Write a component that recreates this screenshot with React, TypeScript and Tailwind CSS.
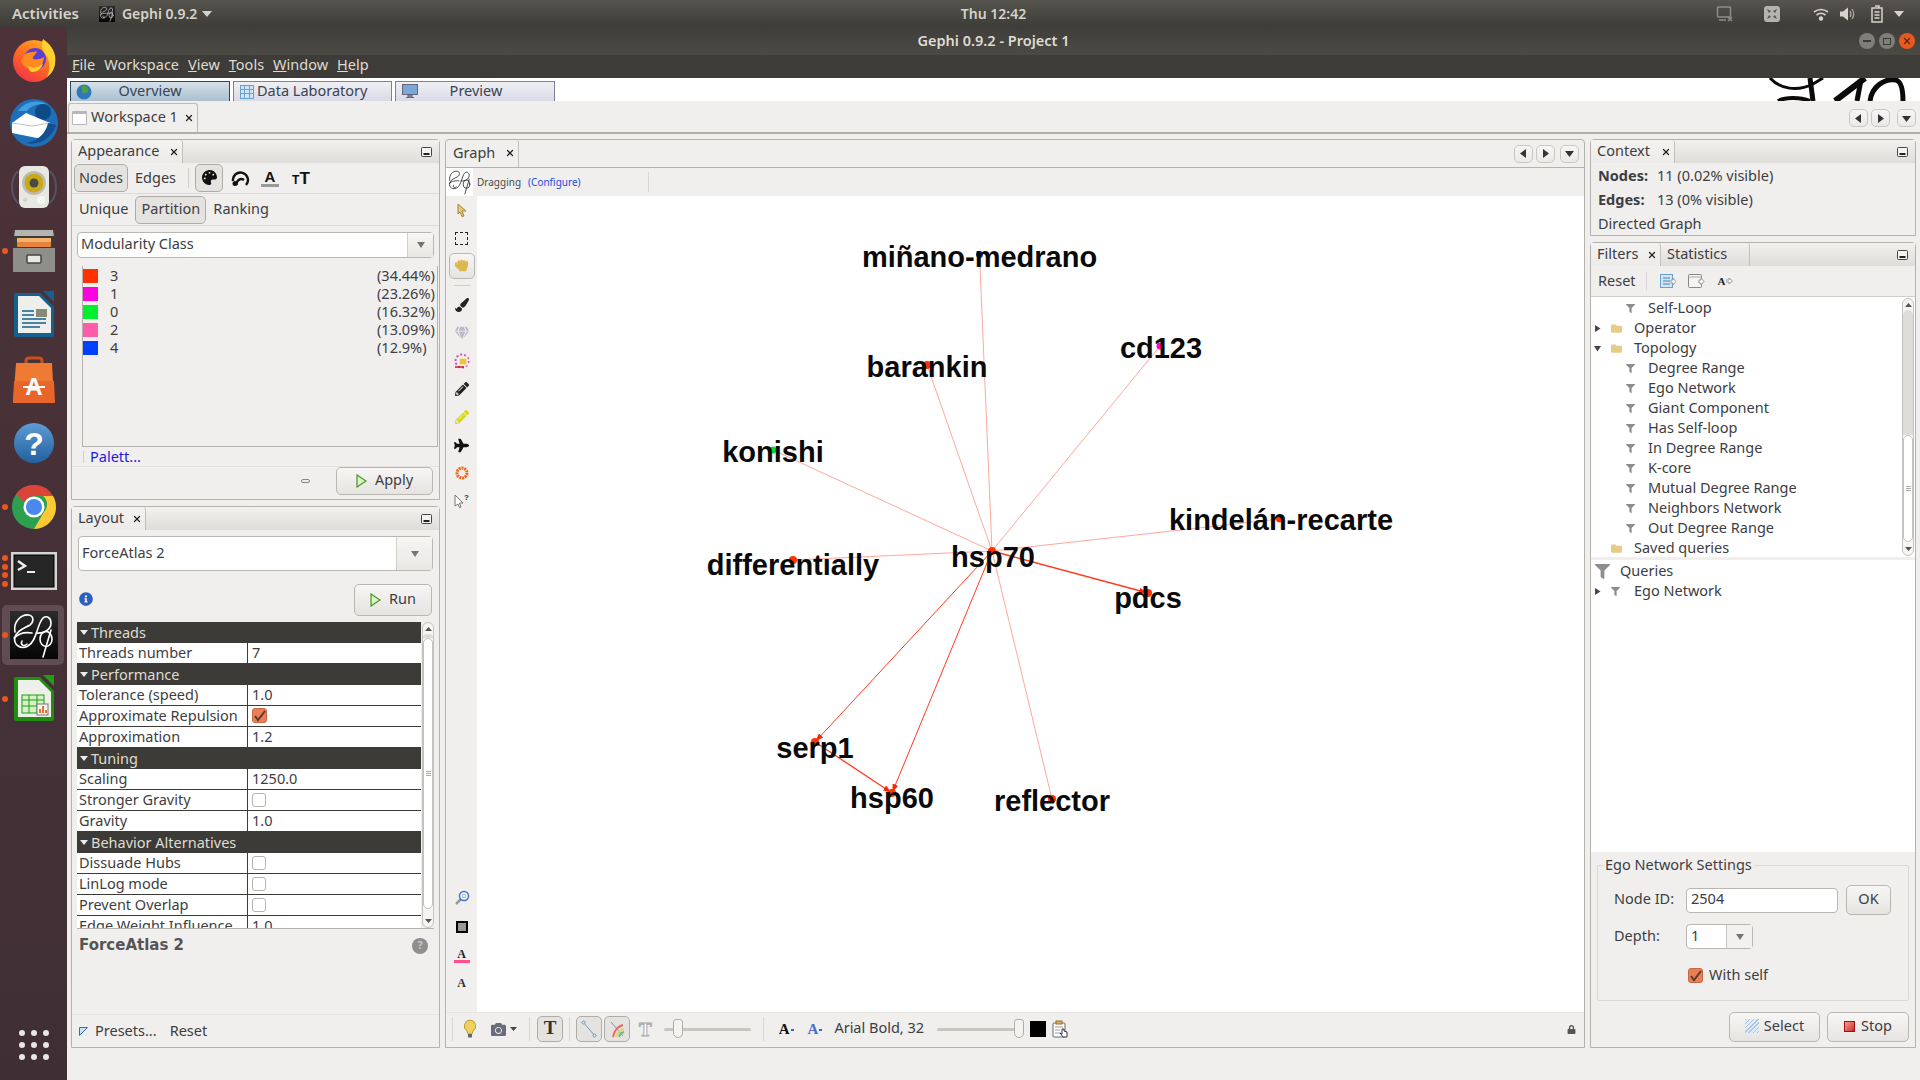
import type { ReactNode } from "react";
import { X } from "lucide-react";
import {
  FaCamera,
  FaFilter,
  FaFolder,
  FaGem,
  FaHandRock,
  FaInfoCircle,
  FaLock,
  FaPaintBrush,
  FaPalette,
  FaPencilAlt,
  FaPlane,
} from "react-icons/fa";

const btn =
  "flex items-center justify-center rounded-[5px] border border-[#b9b7b1] bg-linear-to-b from-[#f7f6f5] to-[#e6e4e1] pb-[2px]";
const pressed = "rounded-[5px] border border-[#aeaca6] bg-[#e5e3e0] flex items-center justify-center pb-[1px]";

function Swirl({ color = "#fff", width = 1.6 }: { color?: string; width?: number }) {
  return (
    <g fill="none" stroke={color} strokeWidth={width} strokeLinecap="round">
      <path d="M5 21C3 11 11 3 19 4c5 1 5 7 1 10-5 3-13 5-15 12-2 8 6 13 13 9 9-5 9-22 15-28 4-3 8 0 8 5 0 7-8 11-15 10" />
      <path d="M4 27c5-5 12-6 18-5" />
      <path d="M12 30c-2 4 2 6 5 3" />
      <ellipse cx="36" cy="28" rx="6" ry="7.500" />
      <path d="M41 19 33 46" />
    </g>
  );
}

function Logo({ size, dark = false }: { size: number; dark?: boolean }) {
  return (
    <svg width={size} height={size} viewBox="0 0 48 48">
      {dark ? (
        <Swirl color="#222" width={1.5} />
      ) : (
        <>
          <defs>
            <linearGradient id="gp" x1="0" y1="0" x2="0" y2="1">
              <stop offset="0" stopColor="#2c2c2c" />
              <stop offset="1" stopColor="#050505" />
            </linearGradient>
          </defs>
          <rect width="48" height="48" fill="url(#gp)" />
          <Swirl />
        </>
      )}
    </svg>
  );
}

function Firefox() {
  return (
    <svg width="48" height="48" viewBox="0 0 48 48">
      <defs>
        <linearGradient id="ff" x1="0.8" y1="0" x2="0.2" y2="1">
          <stop offset="0" stopColor="#ffb020" />
          <stop offset="0.5" stopColor="#ff6a20" />
          <stop offset="1" stopColor="#f0304a" />
        </linearGradient>
      </defs>
      <circle cx="24" cy="26" r="21" fill="url(#ff)" />
      <path d="M33 4c9 6 14 15 12 25-1 6-4 10-8 13 4-9 3-17-2-23-3-4-4-9-2-15Z" fill="#ffd030" />
      <circle cx="25" cy="24" r="11" fill="#5a3fd0" />
      <path d="M14 20c5-4 9-2 13-4-1 4-5 5-4 8 3 1 8 0 11-2 0 7-5 12-12 12-6 0-10-4-11-9 1 0 2-2 3-5Z" fill="#ff8a20" />
      <path d="M18 31c5 3 11 2 15-3-1 6-6 9-11 9-2 0-3-3-4-6Z" fill="#ffcf30" />
    </svg>
  );
}

function Thunderbird() {
  return (
    <svg width="48" height="48" viewBox="0 0 48 48">
      <circle cx="24" cy="24" r="24" fill="#1e6fb8" />
      <path d="M8 12C14 3 28-1 38 6c-8-2-17 0-21 6Z" fill="#3f9fe0" />
      <circle cx="33" cy="13" r="8" fill="#0f4a88" />
      <path d="M2 24 16 14l24 10-8 16-30-6Z" fill="#fff" />
      <path d="M2 24 22 27l18-3" stroke="#b9c4cf" fill="none" />
      <path d="M38 24c-2 10-10 18-22 20 12 3 26-4 30-18Z" fill="#134f92" />
    </svg>
  );
}

function Speaker() {
  return (
    <svg width="48" height="48" viewBox="0 0 48 48">
      <path d="M8 8C0 16 0 32 8 40M40 8c8 8 8 24 0 32" stroke="#56627c" fill="none" strokeWidth="2" opacity="0.7" />
      <rect x="9" y="3" width="30" height="42" rx="6" fill="#e8e8e2" />
      <circle cx="24" cy="20" r="12" fill="#bcbcb4" />
      <circle cx="24" cy="20" r="9.5" fill="#c9a918" />
      <circle cx="24" cy="20" r="4.5" fill="#4a4a42" />
      <circle cx="31" cy="37" r="4" fill="#f6f6f2" />
      <circle cx="15" cy="37" r="2" fill="#d0d0ca" />
    </svg>
  );
}

function Files() {
  return (
    <svg width="48" height="48" viewBox="0 0 48 48">
      <path d="M5 3h38l1 7H4Z" fill="#b4b4b0" />
      <rect x="4" y="9" width="40" height="13" fill="#3e3a36" />
      <rect x="7" y="11" width="34" height="4" fill="#f2b46a" />
      <rect x="7" y="15" width="34" height="5" fill="#e8813c" />
      <rect x="3" y="21" width="42" height="24" fill="#8e8e8a" />
      <rect x="17" y="28" width="14" height="8" rx="1" fill="#e8e8e4" stroke="#444" strokeWidth="1.5" />
    </svg>
  );
}

function OfficeDoc({ tone, corner, children }: { tone: string; corner: string; children: ReactNode }) {
  return (
    <svg width="48" height="48" viewBox="0 0 48 48">
      <path d="M6 2h24l14 14v28a2 2 0 0 1-2 2H6a2 2 0 0 1-2-2V4a2 2 0 0 1 2-2Z" fill={tone} />
      <path d="M8 5h21l12 12v25H8Z" fill="#eeeeea" />
      <path d="M33 0h11v11Z" fill={corner} />
      {children}
    </svg>
  );
}

function Bag() {
  return (
    <svg width="48" height="48" viewBox="0 0 48 48">
      <path d="M16 10V6q0-3 3-3h10q3 0 3 3v4" fill="none" stroke="#c9501c" strokeWidth="3" />
      <path d="M6 8h36l2 40H3Z" fill="#ef7a33" />
      <path d="M4 26h40l1 22H3Z" fill="#e9662a" />
      <text x="24" y="40" textAnchor="middle" fill="#fff" className="font-['Liberation_Sans',sans-serif] font-bold text-[24px]">
        A
      </text>
      <rect x="13" y="31" width="22" height="2" fill="#fff" />
    </svg>
  );
}

function Help() {
  return (
    <svg width="48" height="48" viewBox="0 0 48 48">
      <defs>
        <linearGradient id="hp" x1="0" y1="0" x2="0" y2="1">
          <stop offset="0" stopColor="#5d9cd6" />
          <stop offset="1" stopColor="#22609e" />
        </linearGradient>
      </defs>
      <circle cx="24" cy="24" r="20" fill="url(#hp)" />
      <text x="24" y="36" textAnchor="middle" fill="#fff" className="font-['Liberation_Sans',sans-serif] font-bold text-[32px]">
        ?
      </text>
    </svg>
  );
}

function Chrome() {
  return (
    <svg width="48" height="48" viewBox="0 0 48 48">
      <circle cx="24" cy="24" r="22" fill="#2da04f" />
      <path d="M24 2a22 22 0 0 1 19 11H24a11 11 0 0 0-10 6L6 11A22 22 0 0 1 24 2Z" fill="#dc4437" />
      <path d="M43 13a22 22 0 0 1-19 33l10-17a11 11 0 0 0-1-16Z" fill="#fcc934" />
      <circle cx="24" cy="24" r="10.5" fill="#fff" />
      <circle cx="24" cy="24" r="8" fill="#4a88ee" />
    </svg>
  );
}

function Terminal() {
  return (
    <svg width="48" height="48" viewBox="0 0 48 48">
      <rect x="1" y="5" width="46" height="38" fill="#d5d5d2" />
      <rect x="4" y="8" width="40" height="32" fill="#262626" stroke="#000" />
      <path d="M8 14 15 19 8 23" stroke="#eee" strokeWidth="2.5" fill="none" />
      <path d="M17 25h8" stroke="#eee" strokeWidth="2" />
    </svg>
  );
}

function DockSlot({ dots = 0, active, children }: { dots?: number; active?: boolean; children: ReactNode }) {
  return (
    <div className="relative flex h-[64px] w-full items-center justify-center">
      {active && <div className="absolute left-[2px] top-[2px] h-[60px] w-[62px] rounded-[5px] bg-[#604d53]" />}
      <div className="absolute left-[2px] top-0 flex h-full w-[6px] flex-col items-center justify-center gap-[2.5px]">
        {Array.from({ length: dots }).map((_, i) => (
          <span key={i} className="h-[6px] w-[6px] rounded-full bg-[#e9571f]" />
        ))}
      </div>
      <div className="relative">{children}</div>
    </div>
  );
}

function Dock() {
  return (
    <div className="flex w-[67px] shrink-0 flex-col bg-linear-to-b from-[#4d3239] to-[#3f2f35]">
      <DockSlot><Firefox /></DockSlot>
      <DockSlot><Thunderbird /></DockSlot>
      <DockSlot><Speaker /></DockSlot>
      <DockSlot dots={1}><Files /></DockSlot>
      <DockSlot>
        <OfficeDoc tone="#14618f" corner="#14618f">
          <path d="M12 20h12M12 24h12M12 28h24M12 32h24M12 36h18" stroke="#14618f" strokeWidth="1.6" />
          <rect x="26" y="18" width="11" height="8" fill="#8a8a78" />
        </OfficeDoc>
      </DockSlot>
      <DockSlot><Bag /></DockSlot>
      <DockSlot><Help /></DockSlot>
      <DockSlot dots={1}><Chrome /></DockSlot>
      <DockSlot dots={4}><Terminal /></DockSlot>
      <DockSlot dots={1} active><Logo size={48} /></DockSlot>
      <DockSlot dots={1}>
        <OfficeDoc tone="#1f8f12" corner="#1f9f12">
          <rect x="12" y="20" width="22" height="18" fill="#d6f0c8" stroke="#1f9f12" />
          <path d="M12 25h22M12 31h22M19 20v18M27 20v18" stroke="#1f9f12" />
          <rect x="27" y="29" width="11" height="11" fill="#f4f4f4" stroke="#777" />
          <path d="M30 38v-4M33 38v-7M36 38v-3" stroke="#e8702a" strokeWidth="2" />
        </OfficeDoc>
      </DockSlot>
      <div className="mt-auto mb-[20px] grid w-fit grid-cols-3 gap-[6px] self-center">
        {Array.from({ length: 9 }).map((_, i) => (
          <span key={i} className="h-[6px] w-[6px] rounded-full bg-[#e8e6e6]" />
        ))}
      </div>
    </div>
  );
}

function TopBar() {
  return (
    <div className="flex h-[27px] shrink-0 items-center bg-linear-to-b from-[#56544d] to-[#3d3c37] text-[14px] font-semibold text-[#d6d3cb]">
      <div className="flex w-[287px] items-center pl-[12px]">
        <span className="text-[15px]">Activities</span>
        <span className="ml-[20px]"><Logo size={16} /></span>
        <span className="ml-[7px]">Gephi 0.9.2</span>
        <svg className="ml-[5px]" width="10" height="6" viewBox="0 0 10 6"><path d="M0 0h10L5 6Z" fill="#d6d3cb" /></svg>
      </div>
      <div className="flex-1 text-center">Thu 12:42</div>
      <div className="flex w-[220px] items-center pl-[16px]">
        <svg width="18" height="18" viewBox="0 0 18 18" fill="none" stroke="#8f8d86" strokeWidth="1.5">
          <rect x="1.5" y="2" width="13" height="10" rx="1" />
          <path d="M3 15h7M12 12l4 4M16 12l-4 4" />
        </svg>
        <svg className="ml-[29px]" width="18" height="18" viewBox="0 0 18 18">
          <rect x="1" y="1" width="16" height="16" rx="3" fill="#b5b3ad" />
          <path d="M4 4l4 2-2 2ZM14 4l-2 4-2-2ZM4 14l2-4 2 2ZM14 14l-4-2 2-2Z" fill="#55534d" />
        </svg>
        <svg className="ml-[31px]" width="18" height="18" viewBox="0 0 18 18" fill="none" stroke="#d6d3cb" strokeWidth="1.6">
          <path d="M2 7q7-5 14 0M4.5 10q4.500-3.500 9 0" />
          <circle cx="9" cy="13.500" r="1.400" fill="#d6d3cb" />
        </svg>
        <svg className="ml-[9px]" width="18" height="18" viewBox="0 0 18 18" fill="#d6d3cb">
          <path d="M1 6.500h3L9 2.500v13l-5-4H1Z" />
          <path d="M11 6q2 3 0 6M13 4q3.500 5 0 10" stroke="#a9a69e" strokeWidth="1.300" fill="none" />
        </svg>
        <svg className="ml-[11px]" width="18" height="18" viewBox="0 0 18 18" fill="none" stroke="#d6d3cb" strokeWidth="1.500">
          <path d="M7 1h4v2M4 3h10v14H4Z" />
          <path d="M6.500 7h5M6.500 10h5M6.500 13h5" />
        </svg>
        <svg className="ml-[8px]" width="10" height="6" viewBox="0 0 10 6"><path d="M0 0h10L5 6Z" fill="#d6d3cb" /></svg>
      </div>
    </div>
  );
}

function TitleBar() {
  return (
    <div className="relative flex h-[28px] shrink-0 items-center justify-center bg-linear-to-b from-[#403e3a] to-[#4c4a45] pb-[1px] text-[14.500px] font-semibold text-[#dfdbd2]">
      <span>Gephi 0.9.2 - Project 1</span>
      <div className="absolute right-[5px] top-[6px] flex gap-[4px]">
        <span className="flex h-[16px] w-[16px] items-center justify-center rounded-full bg-[#807e78]"><span className="h-[1.500px] w-[8px] bg-[#3c3b37]" /></span>
        <span className="flex h-[16px] w-[16px] items-center justify-center rounded-full bg-[#807e78]"><span className="h-[7px] w-[8px] border border-[#3c3b37]" /></span>
        <span className="flex h-[16px] w-[16px] items-center justify-center rounded-full bg-[#e9581f]"><X size={10} strokeWidth={3} color="#5a2a14" /></span>
      </div>
    </div>
  );
}

function MenuBar() {
  const items = ["File", "Workspace", "View", "Tools", "Window", "Help"];
  return (
    <div className="flex h-[23px] shrink-0 items-center gap-[9px] bg-[#3e3c38] pb-[3px] pl-[5px] text-[14.500px] text-[#dfdbd2]">
      {items.map((item) => (
        <span key={item}>
          {item === "Workspace" ? (
            item
          ) : (
            <>
              <span className="underline">{item[0]}</span>
              {item.slice(1)}
            </>
          )}
        </span>
      ))}
    </div>
  );
}

function PerspectiveStrip() {
  return (
    <div className="relative flex h-[23px] shrink-0 items-end gap-[3px] overflow-hidden bg-white pl-[3px]">
      <div className="flex h-[20px] w-[160px] items-center border border-b-0 border-[#2b4660] bg-linear-to-b from-[#d6e1e9] to-[#a9bfd0]">
        <svg className="ml-[5px]" width="16" height="16" viewBox="0 0 16 16">
          <circle cx="8" cy="8" r="7.500" fill="#2f78c0" />
          <path d="M5 2q5-1 7 2t-2 5-4-2-1-5Z" fill="#4f9e3f" />
        </svg>
        <span className="flex-1 pb-[2px] pr-[21px] text-center text-[14.500px] text-[#3a4452]">Overview</span>
      </div>
      <div className="flex h-[20px] w-[159px] items-center border border-b-0 border-[#78849a] bg-linear-to-b from-[#f0f0f4] to-[#d8dae6]">
        <svg className="ml-[6px]" width="14" height="14" viewBox="0 0 14 14">
          <rect x="0.500" y="0.500" width="13" height="13" fill="#cfe6f8" stroke="#6aa0d0" />
          <path d="M0 4.500h14M0 8.500h14M4.500 0v14M9.500 0v14" stroke="#6aa0d0" />
        </svg>
        <span className="ml-[3px] pb-[2px] text-[14.500px] text-[#3a4452]">Data Laboratory</span>
      </div>
      <div className="flex h-[20px] w-[160px] items-center border border-b-0 border-[#78849a] bg-linear-to-b from-[#f0f0f4] to-[#d8dae6]">
        <svg className="ml-[6px]" width="16" height="15" viewBox="0 0 16 15">
          <rect x="0.500" y="0.500" width="15" height="10" fill="#7aa8d8" stroke="#667" />
          <path d="M6 11h4v2H6ZM4 13.500h8" stroke="#667" fill="#99a" />
        </svg>
        <span className="flex-1 pb-[2px] pr-[20px] text-center text-[14.500px] text-[#3a4452]">Preview</span>
      </div>
      <svg className="absolute right-0 top-0" width="220" height="23" viewBox="0 0 220 23" fill="none" stroke="#0a0a0a">
        <path d="M70 0c10 11 27 14 43 6l10-6" strokeWidth="3" />
        <path d="M110 0l3 23" strokeWidth="5" />
        <path d="M78 23c7-4 22-4 32 0" strokeWidth="4" />
        <path d="M135 23 165 0" strokeWidth="6" />
        <path d="M161 2l-4 21" strokeWidth="5" />
        <path d="M170 23c2-15 15-23 26-21 6 2 7 12 7 21" strokeWidth="5" />
      </svg>
    </div>
  );
}

function NavBtn({ dir }: { dir: "l" | "r" | "d" }) {
  return (
    <span className="flex h-[18px] w-[19px] items-center justify-center rounded-[5px] border border-[#c9c7c1] bg-linear-to-b from-[#f7f6f5] to-[#ebe9e6]">
      <svg width="9" height="9" viewBox="0 0 9 9" fill="#333">
        {dir === "l" && <path d="M7 0v9L1 4.500Z" />}
        {dir === "r" && <path d="M2 0v9l6-4.500Z" />}
        {dir === "d" && <path d="M0 2h9L4.500 8Z" />}
      </svg>
    </span>
  );
}

function WorkspaceTabs() {
  return (
    <div className="flex h-[33px] shrink-0 items-end justify-between border-b-2 border-[#b1afa7] pl-[1px] pr-[4px]">
      <div className="flex h-[29px] w-[130px] items-center rounded-t-[3px] border border-b-0 border-[#bdbbb5] pl-[3px] text-[14.500px]">
        <span className="h-[14px] w-[15px] rounded-[1px] border border-[#b8b8b8] border-t-[3px] bg-white" />
        <span className="ml-[4px] pb-[3px]">Workspace 1</span>
        <X className="ml-auto mr-[3px]" size={10} strokeWidth={3} color="#222" />
      </div>
      <div className="mb-[5px] flex gap-[3px]">
        <NavBtn dir="l" />
        <NavBtn dir="r" />
        <span className="ml-[4px]"><NavBtn dir="d" /></span>
      </div>
    </div>
  );
}

function MinBtn() {
  return (
    <svg className="mr-[7px]" width="11" height="10" viewBox="0 0 11 10">
      <rect x="0.500" y="0.500" width="10" height="9" rx="1" fill="#f4f3f1" stroke="#444" />
      <rect x="2.500" y="6" width="6" height="2" fill="#222" />
    </svg>
  );
}

function PanelHead({ tabs }: { tabs: { label: string; w: string; active?: boolean }[] }) {
  return (
    <div className="flex h-[23px] shrink-0 items-center justify-between bg-linear-to-b from-[#f2f1ef] to-[#dfddda]">
      <div className="flex h-full items-stretch">
        {tabs.map((t) => (
          <div
            key={t.label}
            className={`flex items-center rounded-t-[3px] border-r border-[#c2c0ba] pl-[6px] text-[14.500px] ${t.w} ${t.active ? "bg-linear-to-b from-[#f4f3f1] to-[#ecebe9]" : ""}`}
          >
            <span className="pb-[2px]">{t.label}</span>
            {t.active && <X className="ml-auto mr-[3px]" size={10} strokeWidth={3} color="#222" />}
          </div>
        ))}
      </div>
      <MinBtn />
    </div>
  );
}

function Caret() {
  return (
    <svg width="10" height="6" viewBox="0 0 10 6"><path d="M1 0h8L5 6Z" fill="#77756f" /></svg>
  );
}

function PlayIcon() {
  return (
    <svg className="mt-[2px]" width="11" height="14" viewBox="0 0 11 14"><path d="M1 1v12l9-6Z" fill="#dff0c8" stroke="#3f9a1c" strokeWidth="1.200" /></svg>
  );
}

function Combo({ label, h, arrow }: { label: string; h: string; arrow: string }) {
  return (
    <div className={`flex items-stretch rounded-[4px] border border-[#b9b7b1] bg-white ${h}`}>
      <span className="flex flex-1 items-center pb-[2px] pl-[3px] text-[14.500px]">{label}</span>
      <span className={`flex items-center justify-center border-l border-[#d0cec9] bg-linear-to-b from-[#f7f6f5] to-[#e9e7e4] ${arrow}`}>
        <Caret />
      </span>
    </div>
  );
}

const partitions = [
  { id: "3", pct: "(34.44%)", color: "bg-[#ff3300]" },
  { id: "1", pct: "(23.26%)", color: "bg-[#ff00e0]" },
  { id: "0", pct: "(16.32%)", color: "bg-[#00f030]" },
  { id: "2", pct: "(13.09%)", color: "bg-[#ff5caa]" },
  { id: "4", pct: "(12.9%)", color: "bg-[#0040ff]" },
];

function AppearancePanel() {
  return (
    <div className="flex h-[361px] shrink-0 flex-col rounded-t-[4px] border border-[#b4b2ac]">
      <PanelHead tabs={[{ label: "Appearance", w: "w-[111px]", active: true }]} />
      <div className="flex h-[31px] shrink-0 items-center border-b border-[#dcdad6] pl-[2px]">
        <span className={`${pressed} h-[28px] w-[54px] text-[14.500px]`}>Nodes</span>
        <span className="ml-[7px] pb-[1px] text-[14.500px]">Edges</span>
        <span className="ml-[12px] h-[20px] w-px bg-[#d0cec9]" />
        <span className={`${pressed} ml-[6px] h-[28px] w-[28px]`}><FaPalette size={15} color="#111" /></span>
        <svg className="ml-[7px]" width="20" height="20" viewBox="0 0 20 20" fill="none" stroke="#111" strokeWidth="2.400">
          <path d="M3 13a7.500 7.500 0 1 1 13 4M7 17a4.500 4.500 0 0 1 7-5" />
          <circle cx="5" cy="15.500" r="2.500" fill="#111" stroke="none" />
        </svg>
        <span className="ml-[11px] flex w-[18px] flex-col items-center font-['Liberation_Sans',sans-serif] text-[15px] font-bold leading-[14px] text-[#111]">
          A<span className="h-[3px] w-[18px] bg-[#9a9a9a]" />
        </span>
        <span className="ml-[13px] font-['Liberation_Sans',sans-serif] font-bold leading-none text-[#111]">
          <span className="text-[12px]">T</span><span className="text-[17px]">T</span>
        </span>
      </div>
      <div className="flex h-[32px] shrink-0 items-center border-b border-[#dcdad6] pl-[7px] text-[14.500px]">
        <span className="pb-[1px]">Unique</span>
        <span className={`${pressed} ml-[7px] h-[28px] w-[71px]`}>Partition</span>
        <span className="ml-[7px] pb-[1px]">Ranking</span>
      </div>
      <div className="mx-[5px] mt-[6px] shrink-0">
        <Combo label="Modularity Class" h="h-[26px]" arrow="w-[26px]" />
      </div>
      <div className="ml-[10px] mr-[1px] mt-[8px] h-[181px] shrink-0 border border-t-0 border-[#b4b2ac] pt-[1px]">
        {partitions.map((p) => (
          <div key={p.id} className="flex h-[18px] items-center pr-[2px] text-[14.500px]">
            <span className={`h-[14px] w-[15px] ${p.color}`} />
            <span className="ml-[12px]">{p.id}</span>
            <span className="ml-auto w-[58px]">{p.pct}</span>
          </div>
        ))}
      </div>
      <div className="flex h-[20px] shrink-0 items-center border-b border-[#e2e0dd] pl-[11px] text-[14.500px] text-[#1a1aee]">
        <span className="mr-[6px] h-[12px] w-px bg-[#d0cec9]" />
        Palett...
      </div>
      <div className="flex flex-1 items-center justify-end pb-[4px] pr-[6px]">
        <span className="mr-[26px] h-[4px] w-[9px] rounded-full border border-[#888]" />
        <span className={`${btn} h-[28px] w-[97px] gap-[8px] text-[14.500px]`}><PlayIcon />Apply</span>
      </div>
    </div>
  );
}

type Row =
  | { kind: "head"; label: string }
  | { kind: "text"; label: string; value: string }
  | { kind: "check"; label: string; on?: boolean };

const rows: Row[] = [
  { kind: "head", label: "Threads" },
  { kind: "text", label: "Threads number", value: "7" },
  { kind: "head", label: "Performance" },
  { kind: "text", label: "Tolerance (speed)", value: "1.0" },
  { kind: "check", label: "Approximate Repulsion", on: true },
  { kind: "text", label: "Approximation", value: "1.2" },
  { kind: "head", label: "Tuning" },
  { kind: "text", label: "Scaling", value: "1250.0" },
  { kind: "check", label: "Stronger Gravity" },
  { kind: "text", label: "Gravity", value: "1.0" },
  { kind: "head", label: "Behavior Alternatives" },
  { kind: "check", label: "Dissuade Hubs" },
  { kind: "check", label: "LinLog mode" },
  { kind: "check", label: "Prevent Overlap" },
  { kind: "text", label: "Edge Weight Influence", value: "1.0" },
];

function Check({ on }: { on?: boolean }) {
  if (!on) return <span className="h-[14px] w-[14px] rounded-[3px] border border-[#b5b3ae] bg-white" />;
  return (
    <span className="flex h-[15px] w-[15px] items-center justify-center rounded-[3px] border border-[#c9683f] bg-[#e87f58]">
      <svg width="13" height="12" viewBox="0 0 13 12" fill="none" stroke="#5c3a30" strokeWidth="2"><path d="M2 6l3 4 7-9" /></svg>
    </span>
  );
}

function Scrollbar({ className, lead, thumb }: { className: string; lead: string; thumb: string }) {
  return (
    <div className={`flex flex-col items-center rounded-[6px] border border-[#c4c2bc] bg-[#f6f5f4] ${className}`}>
      <svg className="mb-[3px] mt-[4px]" width="7" height="4" viewBox="0 0 7 4"><path d="M0 4h7L3.500 0Z" fill="#555" /></svg>
      <div className={`w-full rounded-t-[6px] bg-[#dedcd9] ${lead}`} />
      <div className={`flex w-full flex-col items-center justify-center gap-[1px] rounded-[6px] border border-[#c4c2bc] bg-white ${thumb}`}>
        <span className="h-px w-[5px] bg-[#aaa]" />
        <span className="h-px w-[5px] bg-[#aaa]" />
        <span className="h-px w-[5px] bg-[#aaa]" />
      </div>
      <svg className="mb-[4px] mt-auto" width="7" height="4" viewBox="0 0 7 4"><path d="M0 0h7L3.500 4Z" fill="#555" /></svg>
    </div>
  );
}

function LayoutPanel() {
  return (
    <div className="flex min-h-0 flex-1 flex-col rounded-t-[4px] border border-[#b4b2ac]">
      <PanelHead tabs={[{ label: "Layout", w: "w-[74px]", active: true }]} />
      <div className="mx-[6px] mt-[6px] shrink-0">
        <Combo label="ForceAtlas 2" h="h-[35px]" arrow="w-[36px]" />
      </div>
      <div className="mt-[13px] flex h-[32px] shrink-0 items-center justify-between pl-[7px] pr-[7px]">
        <FaInfoCircle className="mb-[3px]" size={14} color="#2a5fc0" />
        <span className={`${btn} h-[32px] w-[78px] gap-[8px] text-[14.500px]`}><PlayIcon />Run</span>
      </div>
      <div className="mx-[5px] mt-[6px] flex h-[307px] shrink-0 gap-px border-b border-[#b4b2ac]">
        <div className="h-full w-[344px] overflow-hidden">
          {rows.map((r) =>
            r.kind === "head" ? (
              <div key={r.label} className="flex h-[21px] items-center bg-[#3d3b37] pl-[3px] text-[14.500px] text-[#dfdbd2]">
                <svg className="mr-[3px]" width="8" height="5" viewBox="0 0 8 5"><path d="M0 0h8L4 5Z" fill="#eee" /></svg>
                {r.label}
              </div>
            ) : (
              <div key={r.label} className="flex h-[21px] border-b border-[#3d3b37] bg-white text-[14.500px] leading-[19px]">
                <span className="w-[171px] shrink-0 border-r border-[#3d3b37] pl-[2px]">{r.label}</span>
                <span className="flex items-center pb-[1px] pl-[4px]">
                  {r.kind === "text" ? r.value : <Check on={r.on} />}
                </span>
              </div>
            ),
          )}
        </div>
        <Scrollbar className="h-full w-[12px]" lead="h-[4px]" thumb="h-[271px]" />
      </div>
      <div className="flex h-[33px] shrink-0 items-center justify-between pl-[7px] pr-[11px]">
        <span className="font-['DejaVu_Sans',sans-serif] text-[15px] font-bold text-[#555]">ForceAtlas 2</span>
        <span className="flex h-[16px] w-[16px] items-center justify-center rounded-full bg-[#8f8f8f] text-[11px] font-bold text-[#c8c8c8]">?</span>
      </div>
      <div className="mt-auto flex h-[33px] shrink-0 items-center border-t border-[#e6e4e1] pl-[7px] text-[14.500px]">
        <svg width="9" height="9" viewBox="0 0 9 9"><path d="M0.500 0.500h8l-8 8Z" fill="#cfe0f0" stroke="#2a6fb8" /></svg>
        <span className="ml-[7px]">Presets...</span>
        <span className="ml-[13px]">Reset</span>
      </div>
    </div>
  );
}

const toolBase = "flex h-[28px] w-full items-center justify-center";

function ToolColumn() {
  return (
    <div className="flex w-[31px] shrink-0 flex-col pb-[16px]">
      <div className={toolBase}>
        <svg width="10" height="14" viewBox="0 0 10 14"><path d="M1 1l8 7H5l2 5-2 .5L3 9l-2 2Z" fill="#e6c678" stroke="#a8843a" /></svg>
      </div>
      <div className={toolBase}><span className="h-[13px] w-[13px] border border-dashed border-[#222]" /></div>
      <div className={toolBase}>
        <span className={`${btn} h-[26px] w-[26px]`}><FaHandRock size={13} color="#dcb64e" /></span>
      </div>
      <div className="flex h-[11px] items-center justify-center"><span className="h-px w-[16px] bg-[#d0cec9]" /></div>
      <div className={toolBase}><FaPaintBrush size={14} color="#222" /></div>
      <div className={toolBase}><FaGem size={14} color="#b9b9c8" /></div>
      <div className={toolBase}>
        <svg width="16" height="16" viewBox="0 0 16 16">
          <circle cx="8" cy="8" r="6.500" fill="none" stroke="#c85ac8" strokeWidth="2" strokeDasharray="2 2" />
          <rect x="5" y="5" width="8" height="7" fill="#f0c040" stroke="#fff" />
          <path d="M1 14h9" stroke="#c02020" strokeWidth="1.500" />
        </svg>
      </div>
      <div className={toolBase}><FaPencilAlt size={14} color="#222" /></div>
      <div className={toolBase}><FaPencilAlt size={14} color="#d9d810" /></div>
      <div className={toolBase}><FaPlane size={15} color="#111" /></div>
      <div className={toolBase}>
        <svg width="14" height="14" viewBox="0 0 14 14"><circle cx="7" cy="7" r="5" fill="none" stroke="#f0641e" strokeWidth="3" strokeDasharray="2 .8" /></svg>
      </div>
      <div className={toolBase}>
        <svg width="15" height="15" viewBox="0 0 15 15">
          <path d="M1 1l8 8H5.500l1.500 4-1.500.7L4 10l-3 2Z" fill="#fff" stroke="#777" />
          <text x="10" y="6" className="font-['Liberation_Sans',sans-serif] text-[8px] font-bold" fill="#333">?</text>
        </svg>
      </div>
      <div className="mt-auto flex flex-col">
        <div className="flex h-[29px] items-center justify-center">
          <svg width="16" height="16" viewBox="0 0 16 16" fill="none">
            <path d="M7 9 2 14" stroke="#9a9a9a" strokeWidth="2.500" />
            <circle cx="10" cy="6" r="4.500" fill="#fff" stroke="#3f6ad0" strokeWidth="1.500" />
            <rect x="8.500" y="4.500" width="3" height="3" stroke="#3f6ad0" strokeDasharray="1 1" />
          </svg>
        </div>
        <div className="flex h-[29px] items-center justify-center"><span className="h-[12px] w-[12px] border-2 border-black bg-[#999]" /></div>
        <div className="flex h-[29px] flex-col items-center justify-center font-['Liberation_Serif',serif] text-[12px] font-bold leading-[12px] text-[#222]">
          A<span className="h-[3px] w-[16px] bg-[#ff4f8f]" />
        </div>
        <div className="flex h-[26px] items-center justify-center font-['Liberation_Serif',serif] text-[12px] font-bold text-[#333]">A</div>
      </div>
    </div>
  );
}

const HUB = { x: 992, y: 551 };
const nodes = [
  { label: "miñano-medrano", x: 979.5, y: 254.5, ly: 257, fill: "#0a3cd0", r: 3.500 },
  { label: "barankin", x: 927, y: 365, ly: 367, fill: "#ff3300", r: 4 },
  { label: "cd123", x: 1160, y: 346, ly: 347.500, lx: 1161, fill: "#ff00e0", r: 3.500 },
  { label: "konishi", x: 773, y: 450, ly: 452, fill: "#00e030", r: 3.500 },
  { label: "kindelán-recarte", x: 1279.5, y: 519, ly: 520, lx: 1281, fill: "#ff3300", r: 3.500 },
  { label: "differentially", x: 793, y: 560, ly: 565, fill: "#ff3300", r: 4 },
  { label: "hsp70", x: 992, y: 551, ly: 556.500, lx: 993, fill: "#ff3300", r: 4 },
  { label: "pdcs", x: 1148, y: 593, ly: 598, fill: "#ff3300", r: 4 },
  { label: "serp1", x: 815, y: 742, ly: 748, fill: "#ff3300", r: 4 },
  { label: "hsp60", x: 892, y: 793, ly: 798, fill: "#ff3300", r: 4 },
  { label: "reflector", x: 1052, y: 799, ly: 800.500, fill: "#ff3300", r: 4 },
];
const strong = ["pdcs", "serp1", "hsp60"];

function GraphCanvas() {
  return (
    <div className="min-w-0 flex-1 overflow-hidden bg-white">
      <svg width="1109" height="816" viewBox="477 196 1109 816">
        <defs>
          <marker id="arrow" markerWidth="8" markerHeight="6" refX="9" refY="3" orient="auto" markerUnits="userSpaceOnUse">
            <path d="M0 0 8 3 0 6Z" fill="#ff2200" />
          </marker>
        </defs>
        {nodes
          .filter((n) => n.label !== "hsp70")
          .map((n) => {
            const hard = strong.includes(n.label);
            return (
              <line
                key={n.label}
                x1={HUB.x}
                y1={HUB.y}
                x2={n.x}
                y2={n.y}
                stroke={hard ? "#ff3a20" : "#ffa89c"}
                strokeWidth={n.label === "pdcs" ? 1.500 : 1}
                markerEnd={hard ? "url(#arrow)" : undefined}
              />
            );
          })}
        <line x1="815" y1="742" x2="892" y2="793" stroke="#ff3a20" strokeWidth="1.300" markerEnd="url(#arrow)" />
        {nodes.map((n) => (
          <circle key={n.label} cx={n.x} cy={n.y} r={n.r} fill={n.fill} />
        ))}
        {nodes.map((n) => (
          <text
            key={n.label}
            x={n.lx ?? n.x}
            y={n.ly}
            textAnchor="middle"
            dominantBaseline="central"
            className="font-['Liberation_Sans',sans-serif] text-[29px] font-bold"
            fill="#0a0a0a"
          >
            {n.label}
          </text>
        ))}
      </svg>
    </div>
  );
}

function Sep({ className }: { className: string }) {
  return <span className={`h-[24px] w-px bg-[#d8d6d2] ${className}`} />;
}

function MiniSlider({ thumb }: { thumb: string }) {
  return (
    <span className="relative flex h-[20px] w-[87px] items-center">
      <span className="h-[3px] w-full rounded-full bg-[#c8c6c0]" />
      <span className={`absolute top-0 h-[19px] w-[10px] rounded-b-[5px] rounded-t-[3px] border border-[#b0aea8] bg-[#f4f3f1] ${thumb}`} />
    </span>
  );
}

function GraphBottomBar() {
  return (
    <div className="flex h-[35px] shrink-0 items-center border-t border-[#e6e4e1] pb-[2px] pl-[6px] pr-[8px]">
      <Sep className="" />
      <svg className="ml-[10px]" width="14" height="20" viewBox="0 0 14 20">
        <path d="M7 1a6 6 0 0 0-3 11l1 3h4l1-3A6 6 0 0 0 7 1Z" fill="#f0d060" stroke="#b89a30" />
        <rect x="5" y="15" width="4" height="3.500" fill="#666" />
      </svg>
      <span className="ml-[14px]"><FaCamera size={15} color="#6a6c7c" /></span>
      <svg className="ml-[4px]" width="7" height="4" viewBox="0 0 7 4"><path d="M0 0h7L3.500 4Z" fill="#444" /></svg>
      <Sep className="ml-[12px]" />
      <span className={`${pressed} ml-[7px] h-[26px] w-[26px] font-['Liberation_Serif',serif] text-[19px] font-bold text-[#333]`}>T</span>
      <Sep className="ml-[6px]" />
      <span className={`${pressed} ml-[6px] h-[26px] w-[26px]`}>
        <svg width="16" height="18" viewBox="0 0 16 18"><path d="M2 2l12 14" stroke="#6a9ac8" /><circle cx="2.500" cy="2.500" r="1.500" fill="#dfe8f2" stroke="#6a9ac8" /><circle cx="13.500" cy="15.500" r="1.500" fill="#dfe8f2" stroke="#6a9ac8" /></svg>
      </span>
      <span className={`${pressed} ml-[2px] h-[26px] w-[26px]`}>
        <svg width="16" height="18" viewBox="0 0 16 18" fill="none"><path d="M2 2l12 14" stroke="#6a9ac8" /><path d="M4 17Q6 7 14 5" stroke="#e86a6a" strokeWidth="2" /><path d="M7 17Q9 10 15 9" stroke="#e8d060" strokeWidth="2" /><path d="M10 17Q11 13 15 12" stroke="#60c080" strokeWidth="2" /></svg>
      </span>
      <span className="ml-[9px] font-['Liberation_Serif',serif] text-[19px] font-bold leading-none text-white [-webkit-text-stroke:1px_#aaa]">T</span>
      <span className="ml-[12px]"><MiniSlider thumb="left-[9px]" /></span>
      <Sep className="ml-[12px]" />
      <span className="ml-[15px] font-['Liberation_Serif',serif] text-[15px] font-bold leading-none text-[#111]">A</span>
      <span className="ml-[1px] mt-[2px] h-[2px] w-[3px] bg-[#3a5fd0]" />
      <span className="ml-[14px] font-['Liberation_Serif',serif] text-[15px] font-bold leading-none text-[#4a6fd0]">A</span>
      <span className="ml-[1px] mt-[2px] h-[2px] w-[3px] bg-[#3a5fd0]" />
      <span className="ml-[12px] w-[91px] pb-[2px] text-[14.500px]">Arial Bold, 32</span>
      <span className="ml-[12px]"><MiniSlider thumb="left-[77px]" /></span>
      <span className="ml-[6px] h-[16px] w-[16px] bg-black" />
      <svg className="ml-[6px]" width="16" height="18" viewBox="0 0 16 18">
        <rect x="1" y="3" width="12" height="14" rx="1" fill="#fff" stroke="#667" />
        <rect x="4" y="1" width="6" height="3" fill="#d8b060" stroke="#96702a" />
        <path d="M3 7h8M3 10h5M3 13h5" stroke="#99a" />
        <path d="M10 9v5l-2-1 3 4h4v-5l-3-1v-2Z" fill="#fff" stroke="#334" />
      </svg>
      <span className="ml-auto"><FaLock size={9} color="#555" /></span>
    </div>
  );
}

function GraphPanel() {
  return (
    <div className="flex min-w-0 flex-1 flex-col rounded-t-[4px] border border-[#b4b2ac]">
      <div className="flex h-[28px] shrink-0 items-center justify-between border-b border-[#b4b2ac] pr-[5px]">
        <div className="flex h-full w-[73px] items-center rounded-t-[3px] border-r border-[#c2c0ba] pb-[2px] pl-[7px] text-[14.500px]">
          Graph
          <X className="ml-auto mr-[3px]" size={10} strokeWidth={3} color="#222" />
        </div>
        <div className="flex gap-[3px]">
          <NavBtn dir="l" />
          <NavBtn dir="r" />
          <span className="ml-[2px]"><NavBtn dir="d" /></span>
        </div>
      </div>
      <div className="flex h-[28px] shrink-0 items-center">
        <span className="flex h-full w-[27px] items-center justify-center bg-white"><Logo size={26} dark /></span>
        <span className="ml-[4px] text-[10px] text-[#4a4a4a]">Dragging</span>
        <span className="ml-[7px] text-[10px] text-[#1a4ae0]">(Configure)</span>
        <span className="ml-[67px] h-[20px] w-px bg-[#d8d6d2]" />
      </div>
      <div className="flex min-h-0 flex-1">
        <ToolColumn />
        <GraphCanvas />
      </div>
      <GraphBottomBar />
    </div>
  );
}

function ContextPanel() {
  return (
    <div className="flex h-[97px] shrink-0 flex-col rounded-t-[4px] border border-[#b4b2ac]">
      <PanelHead tabs={[{ label: "Context", w: "w-[84px]", active: true }]} />
      <div className="flex flex-col pl-[7px] text-[14.500px] leading-[24px]">
        <div className="flex"><b className="w-[59px]">Nodes:</b>11 (0.02% visible)</div>
        <div className="flex"><b className="w-[59px]">Edges:</b>13 (0% visible)</div>
        <div>Directed Graph</div>
      </div>
    </div>
  );
}

function Funnel({ big }: { big?: boolean }) {
  return <FaFilter size={big ? 15 : 9} color="#8d8d8d" />;
}

function Tri({ open }: { open?: boolean }) {
  return (
    <svg width="7" height="7" viewBox="0 0 7 7" fill="#444">
      {open ? <path d="M0 1h7L3.500 6.500Z" /> : <path d="M1 0v7l5.500-3.500Z" />}
    </svg>
  );
}

type TreeItem = { label: string; kind: "leaf" | "folder"; arrow?: "open" | "closed" };

const tree: TreeItem[] = [
  { label: "Self-Loop", kind: "leaf" },
  { label: "Operator", kind: "folder", arrow: "closed" },
  { label: "Topology", kind: "folder", arrow: "open" },
  { label: "Degree Range", kind: "leaf" },
  { label: "Ego Network", kind: "leaf" },
  { label: "Giant Component", kind: "leaf" },
  { label: "Has Self-loop", kind: "leaf" },
  { label: "In Degree Range", kind: "leaf" },
  { label: "K-core", kind: "leaf" },
  { label: "Mutual Degree Range", kind: "leaf" },
  { label: "Neighbors Network", kind: "leaf" },
  { label: "Out Degree Range", kind: "leaf" },
  { label: "Saved queries", kind: "folder" },
];

function FiltersPanel() {
  return (
    <div className="flex min-h-0 flex-1 flex-col rounded-t-[4px] border border-[#b4b2ac]">
      <PanelHead
        tabs={[
          { label: "Filters", w: "w-[70px]", active: true },
          { label: "Statistics", w: "w-[89px]" },
        ]}
      />
      <div className="flex h-[31px] shrink-0 items-center border-b border-[#d0cec9] pl-[7px] text-[14.500px]">
        <span className="pb-[1px]">Reset</span>
        <span className="ml-[10px] h-[18px] w-px bg-[#d8d6d2]" />
        <svg className="ml-[13px]" width="16" height="15" viewBox="0 0 16 15">
          <rect x="0.500" y="0.500" width="12" height="13" fill="#cfe6f8" stroke="#6aa0d0" />
          <path d="M3 4h7M3 7h7M3 10h7" stroke="#4a80b8" />
          <path d="M11 6h2V4l3 3.500L13 11V9h-2Z" fill="#fff" stroke="#999" />
        </svg>
        <svg className="ml-[12px]" width="17" height="15" viewBox="0 0 17 15">
          <rect x="0.500" y="0.500" width="13" height="13" rx="1" fill="#f4f4f4" stroke="#888" />
          <path d="M0.500 3h13" stroke="#aaa" />
          <path d="M11 6h2V4l3 3.500L13 11V9h-2Z" fill="#fff" stroke="#999" />
        </svg>
        <span className="ml-[13px] font-['Liberation_Serif',serif] text-[11px] font-bold text-[#222]">A</span>
        <svg width="7" height="8" viewBox="0 0 7 8"><path d="M0 3h3V1l3.500 3L3 7V5H0Z" fill="#fff" stroke="#999" /></svg>
      </div>
      <div className="flex h-[260px] shrink-0 bg-white">
        <div className="flex-1 overflow-hidden pt-[1px] text-[14.500px]">
          {tree.map((t) => (
            <div key={t.label} className="flex h-[20px] items-center">
              <span className="flex w-[20px] pl-[3px]">
                {t.arrow && <Tri open={t.arrow === "open"} />}
              </span>
              {t.kind === "leaf" ? (
                <span className="ml-[15px] flex w-[22px]"><Funnel /></span>
              ) : (
                <span className="flex w-[23px]"><FaFolder size={11} color="#e6cc88" /></span>
              )}
              <span>{t.label}</span>
            </div>
          ))}
        </div>
        <Scrollbar className="my-[1px] mr-[1px] w-[12px]" lead="h-[125px]" thumb="h-[107px]" />
      </div>
      <div className="flex h-[3px] shrink-0 justify-center bg-[#f0efed]" />
      <div className="h-[292px] shrink-0 bg-white pt-[1px] text-[14.500px]">
        <div className="flex h-[20px] items-center pl-[4px]">
          <span className="flex w-[25px]"><Funnel big /></span>
          Queries
        </div>
        <div className="flex h-[20px] items-center">
          <span className="flex w-[20px] pl-[3px]"><Tri /></span>
          <span className="flex w-[23px]"><Funnel /></span>
          Ego Network
        </div>
      </div>
      <div className="relative mx-[6px] mt-[13px] flex h-[136px] shrink-0 flex-col rounded-[2px] border border-[#dad8d4] text-[14.500px]">
        <span className="absolute -top-[12px] left-[5px] bg-[#f0efed] px-[2px]">Ego Network Settings</span>
        <div className="mt-[19px] flex items-center">
          <span className="ml-[16px] w-[72px] pb-[2px]">Node ID:</span>
          <span className="flex h-[25px] w-[152px] items-center rounded-[4px] border border-[#b9b7b1] bg-white pb-[2px] pl-[4px]">2504</span>
          <span className={`${btn} ml-[8px] h-[30px] w-[45px]`}>OK</span>
        </div>
        <div className="mt-[9px] flex items-center">
          <span className="ml-[16px] w-[72px] pb-[2px]">Depth:</span>
          <span className="flex h-[25px] w-[67px] items-stretch rounded-[4px] border border-[#b9b7b1] bg-white">
            <span className="flex flex-1 items-center pb-[2px] pl-[4px]">1</span>
            <span className="flex w-[26px] items-center justify-center border-l border-[#c8c6c0] bg-[#f2f1ef]"><Caret /></span>
          </span>
        </div>
        <div className="ml-[90px] mt-[15px] flex items-center gap-[6px]">
          <Check on />
          <span className="pb-[2px]">With self</span>
        </div>
      </div>
      <div className="mt-auto mb-[5px] flex justify-end gap-[7px] pr-[6px] text-[14.500px]">
        <span className={`${btn} h-[30px] w-[91px] gap-[5px]`}>
          <span className="h-[14px] w-[14px] bg-[repeating-linear-gradient(135deg,#a8c4e4_0,#a8c4e4_1px,#e4ecf6_1px,#e4ecf6_3px)]" />
          Select
        </span>
        <span className={`${btn} h-[30px] w-[82px] gap-[6px]`}>
          <span className="h-[11px] w-[11px] border border-[#a01010] bg-linear-to-br from-[#f09a90] to-[#d02020]" />
          Stop
        </span>
      </div>
    </div>
  );
}

export default function App() {
  return (
    <div className="flex h-screen w-screen flex-col overflow-hidden bg-[#f0efed] font-['Noto_Sans',sans-serif] text-[#3d3d42]">
      <TopBar />
      <div className="flex min-h-0 flex-1">
        <Dock />
        <div className="flex min-w-0 flex-1 flex-col">
          <TitleBar />
          <MenuBar />
          <PerspectiveStrip />
          <WorkspaceTabs />
          <div className="flex min-h-0 flex-1 gap-[5px] pb-[32px] pl-[4px] pr-[4px] pt-[5px]">
            <div className="flex w-[369px] shrink-0 flex-col gap-[6px]">
              <AppearancePanel />
              <LayoutPanel />
            </div>
            <GraphPanel />
            <div className="flex w-[326px] shrink-0 flex-col gap-[6px]">
              <ContextPanel />
              <FiltersPanel />
            </div>
          </div>
        </div>
      </div>
    </div>
  );
}
